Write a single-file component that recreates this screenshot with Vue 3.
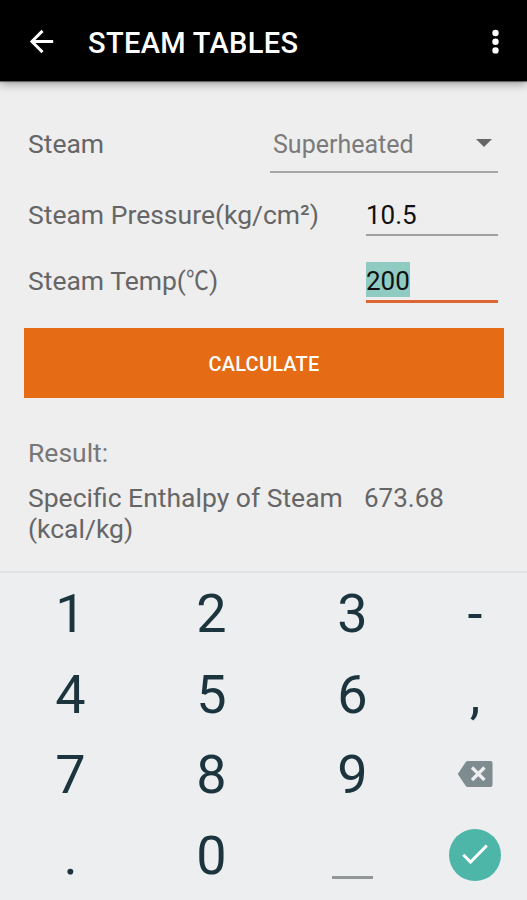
<template>
  <div class="screen">
    <header class="toolbar">
      <svg class="back" viewBox="0 0 24 24" width="35" height="35">
        <path d="M20 11H7.83l5.59-5.59L12 4l-8 8 8 8 1.41-1.41L7.83 13H20v-2z" fill="#fff" />
      </svg>
      <h1>STEAM TABLES</h1>
      <svg class="more" viewBox="0 0 8 26" width="8" height="26">
        <circle cx="4.500" cy="4" r="3.2" fill="#fff" />
        <circle cx="4.500" cy="12.700" r="3.2" fill="#fff" />
        <circle cx="4.500" cy="21.400" r="3.2" fill="#fff" />
      </svg>
    </header>

    <main class="content">
      <div class="row row-select">
        <span class="label">Steam</span>
        <div class="select">
          <span class="value">{{ steamType }}</span>
          <span class="arrow"></span>
        </div>
      </div>
      <div v-for="field in fields" :key="field.label" class="row" :class="{ active: field.active }">
        <span class="label">{{ field.label }}(<span :class="{ degree: field.unit === '℃' }">{{ field.unit }}</span>)</span>
        <div class="field">
          <span class="text">{{ field.value }}</span>
        </div>
      </div>

      <button class="calculate" type="button">CALCULATE</button>

      <p class="caption">Result:</p>
      <div class="result">
        <span class="name">Specific Enthalpy of Steam (kcal/kg)</span>
        <span class="number">{{ result }}</span>
      </div>
    </main>

    <div class="keypad">
      <div v-for="key in keys" :key="key" class="key">
        <svg v-if="key === 'delete'" class="delete" viewBox="0 0 36 28" width="36" height="28">
          <path d="M11 1h22.5a2 2 0 0 1 2 2v22a2 2 0 0 1-2 2H11a3 3 0 0 1-2.4-1.3L.8 14 8.6 2.3A3 3 0 0 1 11 1z" fill="#7f8c8f" />
          <path d="M15 7.500l12.500 12.500M27.500 7.500l-12.500 12.500" stroke="#eceef0" stroke-width="3.200" />
        </svg>
        <span v-else-if="key === 'done'" class="done">
          <svg viewBox="0 0 28 22" width="28" height="22">
            <path d="M2.300 10.800l7.200 7.200L25.800 1.500" fill="none" stroke="#fff" stroke-width="3" />
          </svg>
        </span>
        <span v-else-if="key === 'space'" class="space"></span>
        <span v-else class="digit">{{ key }}</span>
      </div>
    </div>
  </div>
</template>

<script setup>
import { ref } from 'vue'

const steamType = ref('Superheated')
const result = ref('673.68')

const fields = ref([
  { label: 'Steam Pressure', unit: 'kg/cm²', value: '10.5', active: false },
  { label: 'Steam Temp', unit: '℃', value: '200', active: true }
])

const keys = ['1', '2', '3', '-', '4', '5', '6', ',', '7', '8', '9', 'delete', '.', '0', 'space', 'done']
</script>

<style>
body {
  margin: 0;
}
</style>

<style scoped>
.screen {
  display: flex;
  flex-direction: column;
  width: 527px;
  height: 900px;
  overflow: hidden;
  background: #eeeeee;
  color: #666666;
  font-family: Roboto, 'Noto Sans CJK SC', sans-serif;
  font-size: 26px;
}

.toolbar {
  display: flex;
  align-items: center;
  flex: none;
  box-sizing: border-box;
  height: 81px;
  padding: 2px 28px 0 24px;
  background: #000;
  box-shadow: 0 1px 1px rgba(0, 0, 0, 0.45), 0 3px 9px rgba(0, 0, 0, 0.35);
}

.toolbar h1 {
  flex: 1;
  margin: 2px 0 0 29px;
  color: #fff;
  font-size: 29px;
  font-weight: 500;
  line-height: 40px;
  letter-spacing: 0.35px;
}

.content {
  flex: none;
  box-sizing: border-box;
  height: 490px;
  padding: 33px 23px 0 24px;
}

.row {
  display: flex;
  justify-content: space-between;
  height: 43px;
  margin: 0 6px 24px 4px;
  line-height: 43px;
}

.row-select {
  height: 59px;
  margin-bottom: 20px;
  line-height: 60px;
}

.label,
.name {
  font-size: 26.5px;
}

.active .label {
  line-height: 41px;
}

.degree {
  display: inline-block;
  width: 23px;
  transform: scaleX(0.86);
  transform-origin: left;
}

.select {
  display: flex;
  align-items: center;
  justify-content: space-between;
  box-sizing: border-box;
  width: 228px;
  padding: 0 6px 0 3px;
  border-bottom: 2px solid #a6a6a6;
  color: #7b7b7b;
}

.value {
  padding-top: 4px;
  font-size: 25px;
}

.arrow {
  border-left: 8px solid transparent;
  border-right: 8px solid transparent;
  border-top: 8px solid #666;
}

.field {
  box-sizing: border-box;
  width: 132px;
  border-bottom: 2px solid #a0a0a0;
  color: #111;
  line-height: 45px;
}

.active .field {
  border-bottom: 3px solid #dd6633;
}

.active .text {
  display: inline-block;
  height: 35px;
  margin-top: 2px;
  background: #8fcbc1;
  line-height: 39px;
  vertical-align: top;
}

.calculate {
  display: block;
  width: 480px;
  height: 70px;
  margin: 25px 0 0;
  padding: 2px 0 0;
  border: 0;
  background: #e56b15;
  color: #fff;
  font-family: inherit;
  font-size: 20px;
  font-weight: 500;
  letter-spacing: 0.2px;
}

.caption {
  margin: 39px 0 14px 4px;
  color: #777;
  font-size: 26.5px;
  line-height: 31px;
}

.result {
  display: flex;
  margin-left: 4px;
  line-height: 31px;
}

.name {
  width: 336px;
}

.number {
  padding-top: 1px;
}

.keypad {
  display: grid;
  flex: 1;
  grid-template-columns: 141px 141px 141px 104px;
  grid-template-rows: repeat(4, 80.5px);
  border-top: 2px solid #e2e3e4;
  background: #eceef0;
  color: #1c343d;
  font-size: 54px;
}

.key {
  display: flex;
  align-items: center;
  justify-content: center;
}

.digit {
  padding-top: 1px;
}

.done {
  display: flex;
  align-items: center;
  justify-content: center;
  width: 52px;
  height: 52px;
  border-radius: 50%;
  background: #4db6a9;
}

.space {
  width: 41px;
  height: 3px;
  margin-top: 46px;
  background: #939697;
}
</style>
